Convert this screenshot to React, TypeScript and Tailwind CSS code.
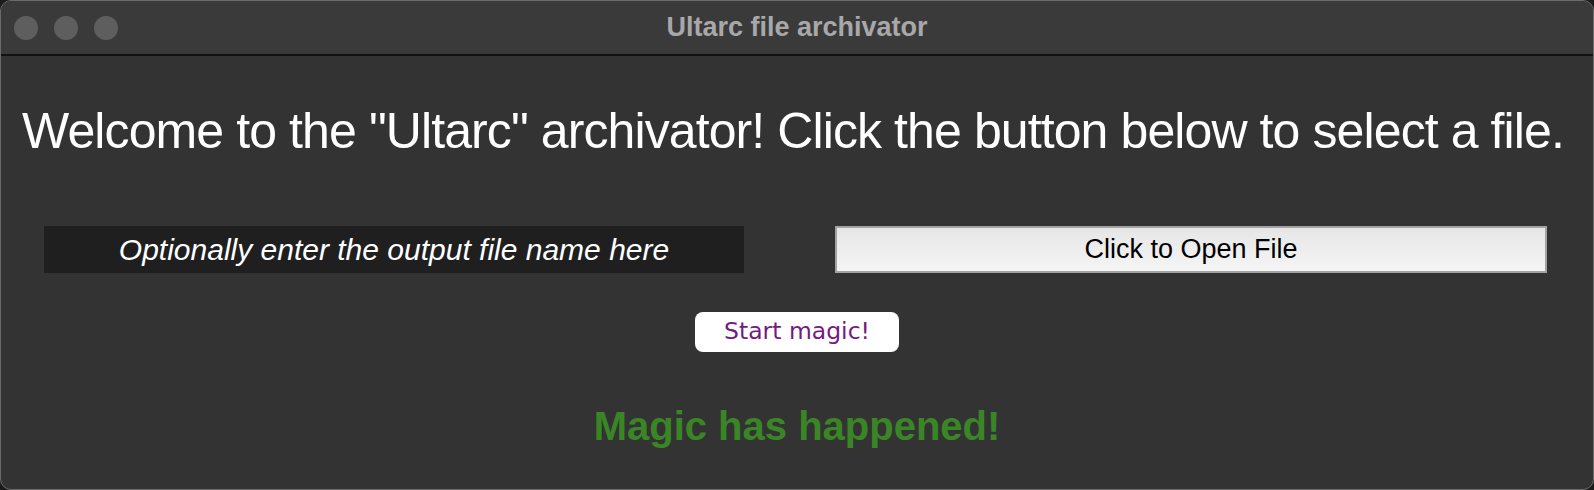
export default function App() {
  return (
    <div className="w-[1594px] h-[490px] bg-[#1b1b1c] overflow-hidden" style={{ fontFamily: '"Liberation Sans", Arial, sans-serif' }}>
      <div className="h-full rounded-[11px] border border-[#6b6b6b] bg-[#333333] overflow-hidden flex flex-col">
        {/* title bar */}
        <div className="relative h-[55px] shrink-0 bg-[#3b3a3b] border-b-2 border-[#121212] flex items-center">
          <div className="flex gap-4 pl-[13px]">
            <span className="w-6 h-6 rounded-full bg-[#5f5e5f]" />
            <span className="w-6 h-6 rounded-full bg-[#5f5e5f]" />
            <span className="w-6 h-6 rounded-full bg-[#5f5e5f]" />
          </div>
          <div className="absolute inset-0 flex items-center justify-center text-[27px] font-bold text-[#a9a8a9]">
            Ultarc file archivator
          </div>
        </div>

        <div className="flex flex-col items-center">
          <h1 className="mt-[50px] mr-[8px] text-[50px] leading-none tracking-[-0.9px] text-white whitespace-nowrap">
            Welcome to the "Ultarc" archivator! Click the button below to select a file.
          </h1>

          <div className="mt-[70px] w-full flex items-center pl-[43px] pr-[46px] gap-[91px]">
            <div className="w-[700px] h-[47px] bg-[#1f1f1f] flex items-center justify-center italic text-[30px] text-white">
              Optionally enter the output file name here
            </div>
            <button className="w-[712px] h-[47px] border-2 border-[#a3a3a3] bg-gradient-to-b from-[#e6e6e6] to-[#f5f5f5] text-[27px] text-black">
              Click to Open File
            </button>
          </div>

          <button
            className="mt-[39px] w-[204px] h-[40px] rounded-lg bg-white text-[23.5px] text-[#761a80]"
            style={{ fontFamily: '"DejaVu Sans", sans-serif' }}
          >
            Start magic!
          </button>

          <div className="mt-[44px] text-[40px] font-bold text-[#3a8626]">Magic has happened!</div>
        </div>
      </div>
    </div>
  )
}
